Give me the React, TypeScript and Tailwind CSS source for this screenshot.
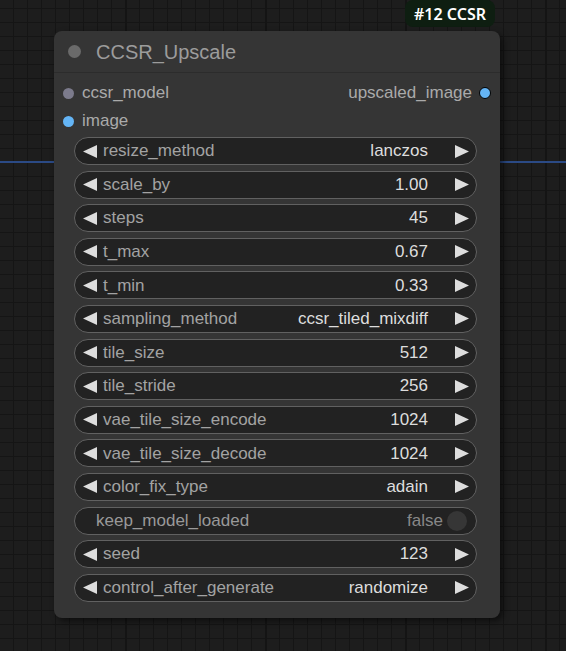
type Widget =
  | { kind: "combo" | "number"; name: string; value: string }
  | { kind: "toggle"; name: string; value: boolean };

const widgets: Widget[] = [
  { kind: "combo", name: "resize_method", value: "lanczos" },
  { kind: "number", name: "scale_by", value: "1.00" },
  { kind: "number", name: "steps", value: "45" },
  { kind: "number", name: "t_max", value: "0.67" },
  { kind: "number", name: "t_min", value: "0.33" },
  { kind: "combo", name: "sampling_method", value: "ccsr_tiled_mixdiff" },
  { kind: "number", name: "tile_size", value: "512" },
  { kind: "number", name: "tile_stride", value: "256" },
  { kind: "number", name: "vae_tile_size_encode", value: "1024" },
  { kind: "number", name: "vae_tile_size_decode", value: "1024" },
  { kind: "combo", name: "color_fix_type", value: "adain" },
  { kind: "toggle", name: "keep_model_loaded", value: false },
  { kind: "number", name: "seed", value: "123" },
  { kind: "combo", name: "control_after_generate", value: "randomize" },
];

function Arrow({ dir }: { dir: "left" | "right" }) {
  return (
    <svg width="14" height="13" viewBox="0 0 14 13" className="shrink-0">
      {dir === "left" ? (
        <path d="M14 0 L0 6.5 L14 13 Z" fill="#dddddd" />
      ) : (
        <path d="M0 0 L14 6.5 L0 13 Z" fill="#dddddd" />
      )}
    </svg>
  );
}

function WidgetRow({ w }: { w: Widget }) {
  if (w.kind === "toggle") {
    return (
      <div className="flex h-[28px] items-center rounded-full border border-[#616161] bg-[#222222] pl-[21px] pr-[9px]">
        <span className="text-[#999999]">{w.name}</span>
        <span className="ml-auto text-[#888888]">{w.value ? "true" : "false"}</span>
        <span className="ml-[4px] h-[20px] w-[20px] rounded-full bg-[#363636]" />
      </div>
    );
  }
  return (
    <div className="flex h-[28px] items-center rounded-full border border-[#616161] bg-[#222222] pl-[8px] pr-[7px]">
      <Arrow dir="left" />
      <span className="ml-[6px] text-[#a3a3a3]">{w.name}</span>
      <span className="ml-auto text-[#dddddd]">{w.value}</span>
      <span className="ml-[27px] flex">
        <Arrow dir="right" />
      </span>
    </div>
  );
}

export default function App() {
  return (
    <div className="relative h-[651px] w-[566px] overflow-hidden bg-[#1d1d1d] bg-[linear-gradient(to_right,#141414_2px,transparent_2px),linear-gradient(to_right,#151515_1px,transparent_1px),linear-gradient(to_bottom,#151515_1px,transparent_1px)] bg-[size:140px_100%,14px_14px,14px_14px] bg-[position:125px_0,13px_0,0_8px] font-['Liberation_Sans',Arial,sans-serif] text-[17px]">
      {/* link wire behind the node */}
      <div className="absolute left-0 top-[161px] h-[2px] w-full bg-[#2b4a85]" />

      {/* node id badge */}
      <div className="absolute left-[405px] top-0 flex h-[27px] w-[90px] items-center justify-center rounded-[8px] bg-[#0e1e11] font-['Noto_Sans',sans-serif] text-[16px] font-semibold text-white">
        #12 CCSR
      </div>

      {/* node */}
      <div className="absolute left-[54px] top-[31px] w-[446px] rounded-[8px] bg-[#353535] shadow-[3px_3px_6px_rgba(0,0,0,0.55)]">
        <div className="flex h-[42px] items-center border-b border-[#2c2c2c] px-[14px]">
          <span className="h-[13px] w-[13px] rounded-full bg-[#6a6a6a]" />
          <span className="ml-[15px] text-[20px] text-[#9c9c9c]">CCSR_Upscale</span>
        </div>

        <div className="flex flex-col pt-[6px]">
          <div className="flex h-[28px] items-center pl-[9px] pr-[9px]">
            <span className="h-[11px] w-[11px] rounded-full bg-[#7c7b8c]" />
            <span className="ml-[8px] text-[#aaaaaa]">ccsr_model</span>
            <span className="ml-auto text-[#aaaaaa]">upscaled_image</span>
            <span className="ml-[7px] h-[12px] w-[12px] rounded-full border border-black bg-[#64b5f6]" />
          </div>
          <div className="flex h-[28px] items-center pl-[9px]">
            <span className="h-[11px] w-[11px] rounded-full bg-[#64b5f6]" />
            <span className="ml-[8px] text-[#aaaaaa]">image</span>
          </div>
        </div>

        <div className="ml-[20px] mr-[23px] mt-[2px] flex flex-col gap-[5.6px] pb-[16px]">
          {widgets.map((w) => (
            <WidgetRow key={w.name} w={w} />
          ))}
        </div>
      </div>
    </div>
  );
}
